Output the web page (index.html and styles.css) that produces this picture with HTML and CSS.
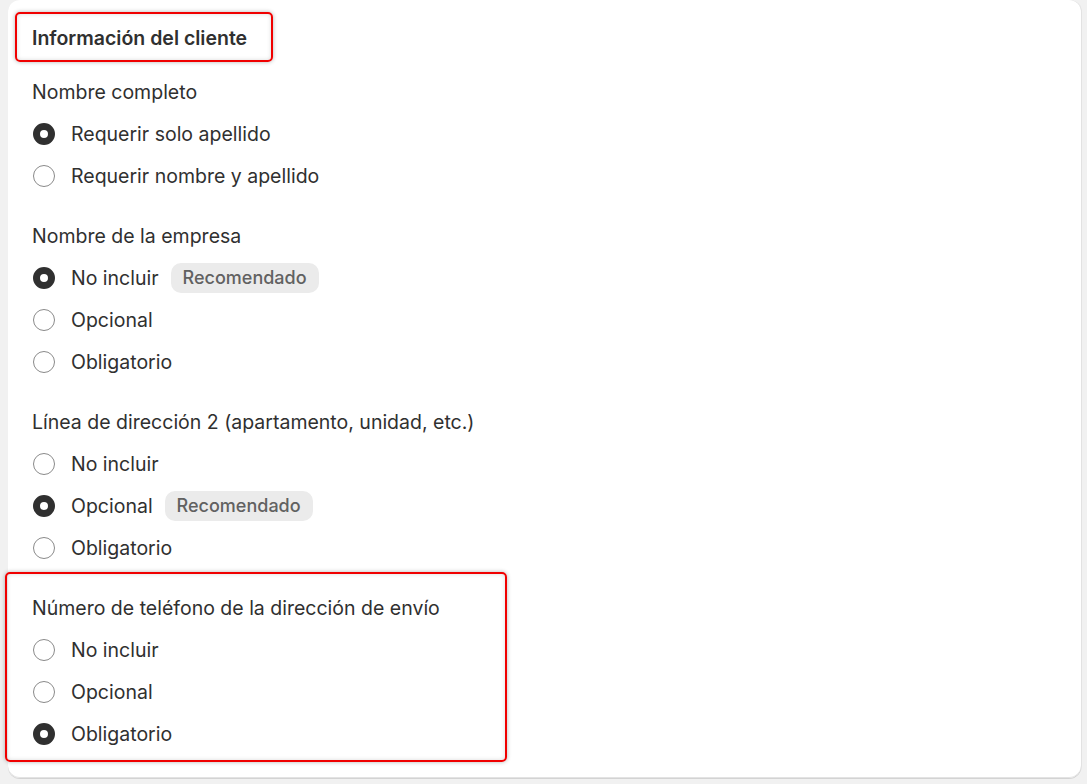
FILE: index.html
```html
<!DOCTYPE html>
<html lang="es">
<head>
    <meta charset="UTF-8">
    <meta name="viewport" content="width=device-width, initial-scale=1.0">
    <title>Información del cliente</title>
    <link rel="stylesheet" href="styles.css">
</head>
<body>
    <div class="card">
        <h2 class="card-title">Información del cliente</h2>

        <!-- Nombre completo -->
        <div class="field">
            <div class="field-label">Nombre completo</div>
            <label class="option"><span class="radio checked"></span>Requerir solo apellido</label>
            <label class="option"><span class="radio"></span>Requerir nombre y apellido</label>
        </div>

        <!-- Empresa -->
        <div class="field">
            <div class="field-label">Nombre de la empresa</div>
            <label class="option"><span class="radio checked"></span>No incluir <span class="badge">Recomendado</span></label>
            <label class="option"><span class="radio"></span>Opcional</label>
            <label class="option"><span class="radio"></span>Obligatorio</label>
        </div>

        <!-- Dirección 2 -->
        <div class="field">
            <div class="field-label">Línea de dirección 2 (apartamento, unidad, etc.)</div>
            <label class="option"><span class="radio"></span>No incluir</label>
            <label class="option"><span class="radio checked"></span>Opcional <span class="badge">Recomendado</span></label>
            <label class="option"><span class="radio"></span>Obligatorio</label>
        </div>

        <!-- Teléfono -->
        <div class="field">
            <div class="field-label">Número de teléfono de la dirección de envío</div>
            <label class="option"><span class="radio"></span>No incluir</label>
            <label class="option"><span class="radio"></span>Opcional</label>
            <label class="option"><span class="radio checked"></span>Obligatorio</label>
        </div>
    </div>

    <!-- marcas de resaltado -->
    <div class="highlight highlight-title"></div>
    <div class="highlight highlight-phone"></div>
</body>
</html>
```

FILE: styles.css
```css
body {
    margin: 0;
    font-family: Inter, "Noto Sans", sans-serif;
    background-color: #f1f1f1;
    color: #303030;
    width: 1087px;
    height: 784px;
    overflow: hidden;
    position: relative;
}

.card {
    margin: 0 6px 0 8px;
    height: 778px;
    box-sizing: border-box;
    background: white;
    border-radius: 12px;
    padding: 26px 24px 0 24px;
    box-shadow: 0 1px 0 rgba(0, 0, 0, 0.12), 1px 0 0 rgba(0, 0, 0, 0.06), inset 0 -1px 0 #e3e3e3;
}

.card-title {
    margin: 0 0 21px 0;
    font-size: 19.5px;
    line-height: 24px;
    font-weight: 600;
}

.field {
    margin-bottom: 18px;
}

.field-label {
    height: 42px;
    line-height: 42px;
    font-size: 19.5px;
}

.option {
    display: flex;
    align-items: center;
    height: 42px;
    font-size: 19.5px;
}

.radio {
    width: 22px;
    height: 22px;
    box-sizing: border-box;
    border: 1px solid #8a8a8a;
    border-radius: 50%;
    margin: 0 16px 0 1px;
    background: white;
    flex-shrink: 0;
}

.radio.checked {
    border: 7px solid #303030;
}

.badge {
    margin-left: 12px;
    background-color: #ebebeb;
    color: #616161;
    font-size: 18px;
    font-weight: 550;
    height: 30px;
    line-height: 30px;
    padding: 0 12px;
    border-radius: 10px;
}

.highlight {
    position: absolute;
    border: 2px solid #f00000;
    border-radius: 5px;
    box-shadow: 0 0 4px rgba(0, 0, 0, 0.3), inset 0 0 4px rgba(0, 0, 0, 0.15);
}

.highlight-title {
    left: 15px;
    top: 12px;
    width: 254px;
    height: 46px;
}

.highlight-phone {
    left: 5px;
    top: 572px;
    width: 498px;
    height: 186px;
}
```
